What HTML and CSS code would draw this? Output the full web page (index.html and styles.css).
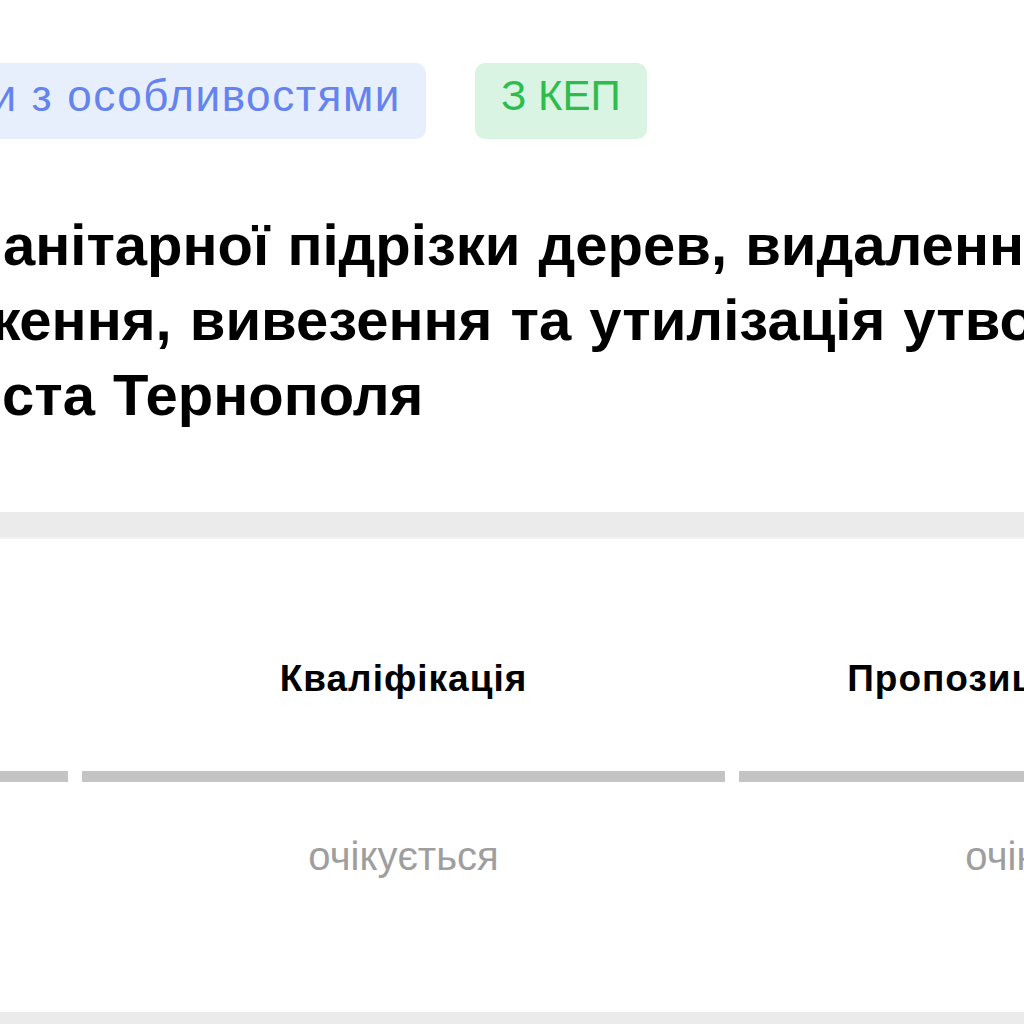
FILE: index.html
```html
<!DOCTYPE html>
<html lang="uk">
<head>
<meta charset="utf-8">
<title>Тендер</title>
<link rel="stylesheet" href="styles.css">
</head>
<body>
<div class="page">
  <div class="tag-row">
    <div class="tag-anchor">
      <span class="tag tag-blue">Відкриті торги з особливостями</span>
    </div>
    <span class="tag tag-green">З КЕП</span>
  </div>

  <h1 class="title">
    <span class="title-line line-1">анітарної підрізки дерев, видалення аварійних</span>
    <span class="title-line line-2">ження, вивезення та утилізація утворених відходів</span>
    <span class="title-line line-3">ста Тернополя</span>
  </h1>

  <div class="band"></div>

  <div class="stages">
    <div class="stage">
      <div class="stage-label">Аукціон</div>
      <div class="stage-bar"></div>
      <div class="stage-status">очікується</div>
    </div>
    <div class="stage">
      <div class="stage-label">Кваліфікація</div>
      <div class="stage-bar"></div>
      <div class="stage-status">очікується</div>
    </div>
    <div class="stage">
      <div class="stage-label">Пропозиції розглянуті</div>
      <div class="stage-bar"></div>
      <div class="stage-status">очікується</div>
    </div>
  </div>

  <div class="band band-bottom"></div>
</div>
</body>
</html>
```

FILE: styles.css
```css
html, body {
  margin: 0;
  padding: 0;
  background: #ffffff;
}

body {
  font-family: "Liberation Sans", Arial, sans-serif;
  color: #000000;
}

.page {
  width: 1024px;
  height: 1024px;
  overflow: hidden;
  position: relative;
}

.tag-row {
  display: flex;
  gap: 49px;
  margin-top: 63px;
}

.tag-anchor {
  width: 426px;
  flex-shrink: 0;
  display: flex;
  justify-content: flex-end;
}

.tag {
  display: block;
  flex-shrink: 0;
  white-space: nowrap;
  font-size: 42px;
  line-height: 48px;
  padding: 9px 26px 19px;
  border-radius: 10px;
}

.tag-blue {
  background: #e7effd;
  color: #6583ef;
  font-size: 44px;
  letter-spacing: 1.6px;
  padding-right: 25px;
}

.tag-green {
  background: #d9f4e3;
  color: #2dbd4c;
}

.title {
  margin: 68px 0 0 0;
  font-size: 58px;
  font-weight: 700;
  line-height: 75px;
  word-spacing: 2px;
  white-space: nowrap;
}

.title-line {
  display: block;
}

.line-1 {
  margin-left: 3px;
}

.line-2 {
  margin-left: -21px;
}

.line-3 {
  margin-left: 2px;
}

.band {
  margin-top: 80px;
  height: 25px;
  background: #ebebeb;
  border-bottom: 2px solid #f3f3f3;
}

.band-bottom {
  margin-top: 132px;
  border-bottom: none;
  height: 40px;
}

.stages {
  display: flex;
  gap: 14px;
  margin-left: -575px;
  margin-top: 118px;
}

.stage {
  width: 643px;
  flex-shrink: 0;
  display: flex;
  flex-direction: column;
  align-items: stretch;
  text-align: center;
}

.stage-label {
  font-size: 37px;
  font-weight: 700;
  line-height: 44px;
  letter-spacing: 1px;
  white-space: nowrap;
}

.stage-bar {
  margin-top: 70px;
  height: 11px;
  background: #c4c4c4;
}

.stage-status {
  margin-top: 50px;
  font-size: 40px;
  line-height: 48px;
  color: #9e9e9e;
  white-space: nowrap;
}
```
